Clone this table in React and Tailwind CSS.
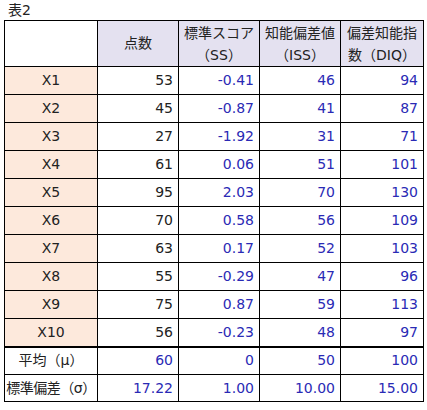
const rows = [
  ['X1', 53, '-0.41', 46, 94],
  ['X2', 45, '-0.87', 41, 87],
  ['X3', 27, '-1.92', 31, 71],
  ['X4', 61, '0.06', 51, 101],
  ['X5', 95, '2.03', 70, 130],
  ['X6', 70, '0.58', 56, 109],
  ['X7', 63, '0.17', 52, 103],
  ['X8', 55, '-0.29', 47, 96],
  ['X9', 75, '0.87', 59, 113],
  ['X10', 56, '-0.23', 48, 97],
];

export default function App() {
  return (
    <div
      className="w-[427px] h-[410px] bg-white text-[14px] text-[#222]"
      style={{ fontFamily: '"DejaVu Sans", "Noto Sans CJK JP", sans-serif' }}
    >
      <div className="pl-[8px] pt-[1px] h-[20px] leading-[18px]">表2</div>
      <table className="ml-[4px] border-collapse border border-black table-fixed w-[419px]">
        <colgroup>
          <col className="w-[93px]" />
          <col className="w-[81px]" />
          <col className="w-[81px]" />
          <col className="w-[81px]" />
          <col className="w-[83px]" />
        </colgroup>
        <thead>
          <tr className="h-[46px]">
            <th className="border border-black bg-white"></th>
            <th className="border border-black bg-[#e4e1f0] font-normal text-center">点数</th>
            <th className="border border-black bg-[#e4e1f0] font-normal text-center leading-[22px]">
              標準スコア<br />（SS）
            </th>
            <th className="border border-black bg-[#e4e1f0] font-normal text-center leading-[22px]">
              知能偏差値<br />（ISS）
            </th>
            <th className="border border-black bg-[#e4e1f0] font-normal text-center leading-[22px]">
              偏差知能指<br />数（DIQ）
            </th>
          </tr>
        </thead>
        <tbody>
          {rows.map((r) => (
            <tr key={r[0]} className="h-[28px]">
              <td className="border border-black bg-[#fde9dc] text-center">{r[0]}</td>
              <td className="border border-black text-right pr-[5px]">{r[1]}</td>
              <td className="border border-black text-right pr-[5px] text-[#2a2ab5]">{r[2]}</td>
              <td className="border border-black text-right pr-[5px] text-[#2a2ab5]">{r[3]}</td>
              <td className="border border-black text-right pr-[5px] text-[#2a2ab5]">{r[4]}</td>
            </tr>
          ))}
          <tr className="h-[28px]">
            <td className="border border-black border-t-[2px] text-center">平均（μ）</td>
            <td className="border border-black border-t-[2px] text-right pr-[5px] text-[#2a2ab5]">60</td>
            <td className="border border-black border-t-[2px] text-right pr-[5px] text-[#2a2ab5]">0</td>
            <td className="border border-black border-t-[2px] text-right pr-[5px] text-[#2a2ab5]">50</td>
            <td className="border border-black border-t-[2px] text-right pr-[5px] text-[#2a2ab5]">100</td>
          </tr>
          <tr className="h-[27px]">
            <td className="border border-black text-center whitespace-nowrap tracking-[-0.5px]">標準偏差（σ）</td>
            <td className="border border-black text-right pr-[5px] text-[#2a2ab5]">17.22</td>
            <td className="border border-black text-right pr-[5px] text-[#2a2ab5]">1.00</td>
            <td className="border border-black text-right pr-[5px] text-[#2a2ab5]">10.00</td>
            <td className="border border-black text-right pr-[5px] text-[#2a2ab5]">15.00</td>
          </tr>
        </tbody>
      </table>
    </div>
  );
}
